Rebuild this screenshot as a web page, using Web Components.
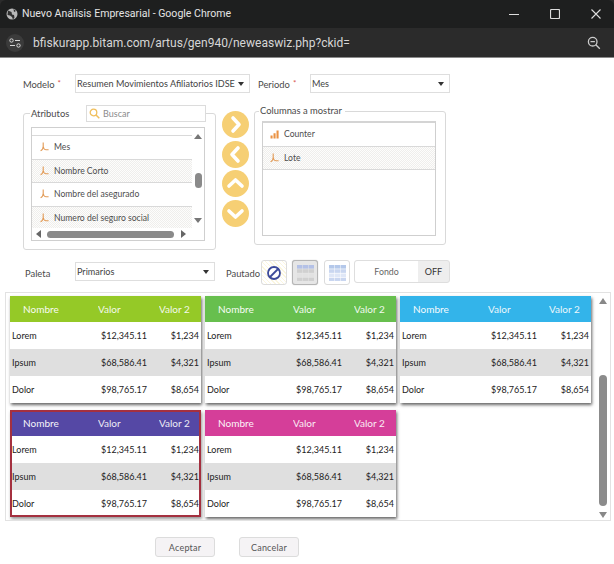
<!DOCTYPE html>
<html lang="es"><head><meta charset="utf-8"><title>Nuevo Análisis Empresarial</title>
<style>
html,body{margin:0;padding:0;background:#fff}
body{font-family:Lato,"Liberation Sans",sans-serif;color:#444;font-size:9.4px}
</style></head><body>
<app-root></app-root>
<script>
function def(name, css, html, extra){
  const t=document.createElement('template');
  t.innerHTML='<style>'+css+'</style>'+html;
  customElements.define(name,class extends HTMLElement{
    constructor(){super();this.attachShadow({mode:'open'}).appendChild(t.content.cloneNode(true));}
    connectedCallback(){if(extra)extra.call(this,this.shadowRoot);}
  });
}
const HATCH='conic-gradient(#efeeec 25%,#fdfdfc 0 50%,#efeeec 0 75%,#fdfdfc 0) 0 0/2px 2px';
const DIM='<svg width="9" height="10" viewBox="0 0 9 10"><path d="M3.200 .5v4C3.200 6.600 2.400 7.900.6 8.800M3.200 4.500c.3 2 1.300 3.200 3 3.200h2.400" fill="none" stroke="#e29a55" stroke-width="1.100"/></svg>';
const BARS='<svg width="9" height="10" viewBox="0 0 9 10"><path d="M.5 6.500h2.100v3H.5zM3.500 4.200h2.100v5.300H3.500zM6.500 1.500h2.100v8H6.500z" fill="#ea9243"/></svg>';

def('window-chrome',`
:host{display:block;height:58px;background:#2b2b2b;color:#e4e4e4;font-family:Roboto,"Liberation Sans",sans-serif}
.bar{box-sizing:border-box;height:28px;background:#1e1f1f;display:flex;align-items:center;padding:0 0 1px 6px;border-radius:6px 6px 0 0;overflow:hidden}
.title{font-size:10.550px;margin-left:4px;flex:1;white-space:nowrap}
.ctl{width:41px;display:flex;justify-content:center;flex:none}
.url{box-sizing:border-box;height:30px;border-bottom:1px solid #8a8a8a;display:flex;align-items:center;padding-left:6px}
.addr{font-size:12.050px;margin-left:9px;flex:1;white-space:nowrap;color:#d6d6d6}
.zoom{margin-right:13px;display:flex}
`,`<div class="bar"><svg width="12" height="12" viewBox="0 0 12 12"><circle cx="6" cy="6" r="5.500" fill="#b8b8b8"/><path d="M2 2.500 5.500 4l.5 2.500 2 .5.5 2.500-1.500 2L6 9 4 7.500 1.500 7zM7.500 1l2.500 2-2 1z" fill="#303030"/></svg><span class="title">Nuevo Análisis Empresarial - Google Chrome</span>
<span class="ctl"><svg width="10" height="10"><path d="M0 5.500h10" stroke="#ddd"/></svg></span>
<span class="ctl"><svg width="10" height="10"><rect x=".5" y=".5" width="9" height="9" rx="1" fill="none" stroke="#ddd" stroke-width="1.200"/></svg></span>
<span class="ctl" style="margin-right:-2.500px"><svg width="10" height="10"><path d="M.5.500l9 9M9.500.500l-9 9" stroke="#ddd" stroke-width="1.100"/></svg></span></div>
<div class="url"><svg width="18" height="18" viewBox="0 0 18 18"><circle cx="9" cy="9" r="9" fill="#3b3b3b"/><path d="M9 6.500h5M4 11.500h5" stroke="#d8d8d8" stroke-width="1.200"/><circle cx="5.500" cy="6.500" r="1.700" fill="none" stroke="#d8d8d8"/><circle cx="12.500" cy="11.500" r="1.700" fill="none" stroke="#d8d8d8"/></svg>
<span class="addr">bfiskurapp.bitam.com/artus/gen940/neweaswiz.php?ckid=</span>
<span class="zoom"><svg width="14" height="14" viewBox="0 0 14 14"><circle cx="5.700" cy="5.700" r="4.300" fill="none" stroke="#ccc" stroke-width="1.300"/><path d="M3.500 5.700h4.400M8.800 8.800l4 4" stroke="#ccc" stroke-width="1.300"/></svg></span></div>`);

def('form-label',`:host{display:block;font-size:9.400px;color:#4a4a4a;white-space:nowrap}
.r{color:#d9534f;font-size:8px;vertical-align:2px;margin-left:3px}`,`<slot></slot><span class="r" id="r"></span>`,function(s){if(this.hasAttribute('req'))s.getElementById('r').textContent='*';});

def('select-box',`:host{display:flex;align-items:center;box-sizing:border-box;height:19px;border:1px solid #dedede;background:#fff;padding:0 4px 0 1px;font-size:9.100px;color:#444;white-space:nowrap;overflow:hidden}
.v{flex:1;overflow:hidden}
i{border-left:3.500px solid transparent;border-right:3.500px solid transparent;border-top:4px solid #333;margin:0 1px 0 3px;flex:none}`,`<span class="v"><slot></slot></span><i></i>`);

def('list-row',`:host{display:flex;align-items:center;box-sizing:border-box;height:23.500px;border-bottom:1px solid #d9d9d9;font-size:8.600px;color:#4d4d4d;white-space:nowrap;padding-left:8px}
:host([hatch]){background:${HATCH}}
span{display:flex;margin-right:5px}`,`<span id="i"></span><slot></slot>`,function(s){s.getElementById('i').innerHTML=this.getAttribute('icon')=='bars'?BARS:DIM;});

def('round-arrow',`:host{display:block;width:27px;height:27px;border-radius:50%;background:#f6cf74}svg{display:block}`,`<svg width="27" height="27" viewBox="0 0 27 27"><path id="p" d="" fill="none" stroke="#fff" stroke-width="3.600" stroke-linecap="round" stroke-linejoin="round"/></svg>`,function(s){
  s.getElementById('p').setAttribute('d',{r:'M11 7l6 6.500-6 6.500',l:'M16 7l-6 6.500 6 6.500',u:'M7 16l6.500-6 6.500 6',d:'M7 11l6.500 6 6.500-6'}[this.getAttribute('dir')]);});

def('attr-panel',`:host{display:block}
fieldset{margin:0;width:193px;min-width:0;height:146px;box-sizing:border-box;border:1px solid #d9d9d9;border-radius:3px;padding:5px 10px 0 7px}
legend{display:flex;align-items:center;padding:0;margin-left:-1px;width:176px;box-sizing:border-box;height:18px;font-size:9.400px;color:#4a4a4a}
.leg{padding-left:1px;width:56px;box-sizing:border-box;flex:none}
.search{box-sizing:border-box;width:120px;height:17px;border:1px solid #dcdcdc;display:flex;align-items:center;padding-left:2px;font-size:9px;color:#8c8c8c;flex:none}
.search svg{margin-right:3px}
.box{box-sizing:border-box;height:114px;border:1px solid #cfcfcf;display:grid;grid-template-columns:1fr 12px;grid-template-rows:1fr 12px;overflow:hidden}
.rows{overflow:hidden}
.top{height:7px;border-bottom:1px solid #d9d9d9}
.v{display:flex;flex-direction:column;align-items:center}
.h{display:flex;align-items:center;grid-column:1 / 3;padding-left:4px}
.u,.d{width:0;border-left:4px solid transparent;border-right:4px solid transparent}
.u{border-bottom:5px solid #777;margin-top:6px}
.d{border-top:5px solid #777;margin-top:30px}
.vt{width:7px;height:15px;border-radius:3.500px;background:#8a8a8a;margin-top:34px}
.l,.ri{width:0;border-top:4px solid transparent;border-bottom:4px solid transparent}
.l{border-right:5px solid #666}
.ri{border-left:5px solid #666;margin-left:7px}
.ht{width:127px;height:7px;border-radius:3.500px;background:#8a8a8a;margin-left:6px}
`,`<fieldset><legend><span class="leg">Atributos</span><span class="search"><svg width="11" height="11" viewBox="0 0 11 11"><circle cx="4.500" cy="4.500" r="3.300" fill="none" stroke="#f0bf5d" stroke-width="1.300"/><path d="M7 7l3.300 3.300" stroke="#f0bf5d" stroke-width="1.500"/></svg>Buscar</span></legend>
<div class="box"><div class="rows"><div class="top"></div><slot></slot></div>
<div class="v"><i class="u"></i><i class="vt"></i><i class="d"></i></div>
<div class="h"><i class="l"></i><i class="ht"></i><i class="ri"></i></div></div></fieldset>`);

def('cols-panel',`:host{display:block}
fieldset{margin:0;min-width:0;width:192px;height:141px;box-sizing:border-box;border:1px solid #d9d9d9;border-radius:3px;padding:3px 9px 0 7px}
legend{padding:0 3px 0 1px;margin-left:-3px;height:14px;line-height:14px;font-size:9.400px;color:#4a4a4a}
.box{box-sizing:border-box;height:115px;border:1px solid #cfcfcf;border-top:2px solid #d4d4d4}
::slotted(list-row){padding-left:7px}`,`<fieldset><legend>Columnas a mostrar</legend><div class="box"><slot></slot></div></fieldset>`);

def('pattern-btn',`:host{display:flex;align-items:center;justify-content:center;box-sizing:border-box;width:26px;height:25px;border:1px solid #dcdcdc;border-radius:3px;background:#fff}
:host([on]){background:#e6e6e6;border:1px solid #b5b5b5;box-shadow:0 0 1px #aaa}
:host([kind=none]){background:repeating-linear-gradient(45deg,#fbf6df 0 1px,#fff 1px 3px)}svg{display:block}`,`<span id="x" style="display:flex"></span>`,function(s){
  const k=this.getAttribute('kind');
  if(k=='none'){s.getElementById('x').innerHTML='<svg width="16" height="16" viewBox="0 0 16 16"><circle cx="8" cy="8" r="6" fill="#fff" stroke="#3c4a9a" stroke-width="1.800"/><path d="M4 12l8-8" stroke="#3c4a9a" stroke-width="1.800"/></svg>';return;}
  const a=k=='gray'?['#b4c1e6','#d0d0d0','#e2e2e2']:['#b4c8ea','#c9d6f0','#dfe7f7'];
  let h='';
  [0,1,2,3].forEach(r=>[0,1,2].forEach(c=>{h+=`<rect x="${c*6}" y="${r*4.25}" width="5.500" height="3.600" fill="${r==0?a[0]:(r%2?a[1]:a[2])}"/>`}));
  s.getElementById('x').innerHTML=`<svg width="17" height="16">${h}</svg>`;
});

def('fondo-toggle',`:host{display:flex;box-sizing:border-box;width:96px;height:23px;border:1px solid #dedede;border-radius:3px;background:#eeeeee;font-size:8.800px;color:#4a4a4a;align-items:stretch}
.a{flex:1;background:#fff;display:flex;align-items:center;justify-content:center;border-radius:3px 0 0 3px;color:#666}
.b{width:31px;display:flex;align-items:center;justify-content:center;color:#333;font-size:9px}`,`<span class="a">Fondo</span><span class="b">OFF</span>`);

def('style-card',`:host{display:block;background:#fff;box-shadow:1px 2px 3px rgba(50,50,50,.75);height:107px;font-size:9px;color:#222}
:host([selected]){outline:2px solid #a4303f;outline-offset:-2px;box-shadow:1px 2px 3px rgba(50,50,50,.5)}
.h{height:26px;display:flex;align-items:center;color:#fff;font-size:10px}
.n{width:88px;padding-left:13px;box-sizing:border-box;opacity:.95}.w{width:61px;opacity:.9}.z{opacity:.9;white-space:nowrap}
.r{height:27px;box-sizing:border-box;padding:0 0 1px 2px;display:grid;grid-template-columns:50px 85px 52px;align-items:center}
.r span+span{text-align:right}
.g{background:#dfdfdf}
`,`<div class="h" id="h"><span class="n">Nombre</span><span class="w">Valor</span><span class="z">Valor 2</span></div>
<div class="r"><span>Lorem</span><span>$12,345.11</span><span>$1,234</span></div>
<div class="r g"><span>Ipsum</span><span>$68,586.41</span><span>$4,321</span></div>
<div class="r"><span>Dolor</span><span>$98,765.17</span><span>$8,654</span></div>`,function(s){s.getElementById('h').style.background=this.getAttribute('color');});

def('palette-grid',`:host{display:grid;grid-template-columns:1fr 12px;box-sizing:border-box;margin-left:5px;width:606px;height:229px;border:1px solid #e2e2e2;overflow:hidden}
.c{display:grid;grid-template-columns:repeat(3,191px);gap:7px 4px;padding:3px 0 0 4px;align-content:start}
.s{display:flex;flex-direction:column;align-items:center;margin-left:-2px}
.u,.d{width:0;border-left:4px solid transparent;border-right:4px solid transparent}
.u{border-bottom:6px solid #888;margin-top:5px}
.t{width:8px;height:131px;border-radius:4px;background:#8b8b8b;margin-top:71px}
.d{border-top:6px solid #888;margin-top:6px}`,`<div class="c"><slot></slot></div><div class="s"><i class="u"></i><i class="t"></i><i class="d"></i></div>`);

def('action-btn',`:host{display:flex;align-items:center;justify-content:center;box-sizing:border-box;width:60px;height:20px;border:1px solid #dcdcdc;border-radius:3px;background:#f5f3f5;font-size:9px;color:#555;letter-spacing:.2px}`,`<slot></slot>`);

def('app-root',`:host{display:block;width:614px;height:564px;overflow:hidden;background:#fff}
.r1{display:flex;align-items:center;height:19px;margin-top:16px;padding-left:23px}
.r2{display:flex;align-items:flex-start;margin-top:11px;padding-left:23px}
.arrows{display:flex;flex-direction:column;gap:2.500px;margin:7px 0 0 5.500px;width:27px}
.r3{display:flex;align-items:center;height:25px;margin-top:10px;padding-left:25px}
.r3 select-box{margin-bottom:2px}
.btns{display:flex;justify-content:flex-start;gap:24px;padding-left:155px;margin-top:16px}
`,`<window-chrome></window-chrome>
<div class="r1"><form-label req style="width:52px">Modelo</form-label><select-box style="width:175px">Resumen Movimientos Afiliatorios IDSE</select-box><form-label req style="width:52px;margin-left:8px">Periodo</form-label><select-box style="width:140px">Mes</select-box></div>
<div class="r2"><attr-panel><list-row>Mes</list-row><list-row hatch>Nombre Corto</list-row><list-row>Nombre del asegurado</list-row><list-row hatch>Numero del seguro social</list-row></attr-panel>
<div class="arrows"><round-arrow dir="r"></round-arrow><round-arrow dir="l"></round-arrow><round-arrow dir="u"></round-arrow><round-arrow dir="d"></round-arrow></div>
<cols-panel style="margin-left:5.500px"><list-row icon="bars">Counter</list-row><list-row hatch>Lote</list-row></cols-panel></div>
<div class="r3"><form-label style="width:50px">Paleta</form-label><select-box style="width:140px">Primarios</select-box><form-label style="width:35px;margin-left:11px">Pautado</form-label><pattern-btn kind="none"></pattern-btn><pattern-btn kind="gray" on style="margin-left:5px"></pattern-btn><pattern-btn kind="blue" style="margin-left:6px"></pattern-btn><fondo-toggle style="margin-left:4px;margin-bottom:2px"></fondo-toggle></div>
<palette-grid style="margin-top:7px"><style-card color="#95c927"></style-card><style-card color="#67bf4e"></style-card><style-card color="#33b4ea"></style-card><style-card color="#5548a5" selected></style-card><style-card color="#d53e99"></style-card></palette-grid>
<div class="btns"><action-btn>Aceptar</action-btn><action-btn>Cancelar</action-btn></div>`);
</script></body></html>
